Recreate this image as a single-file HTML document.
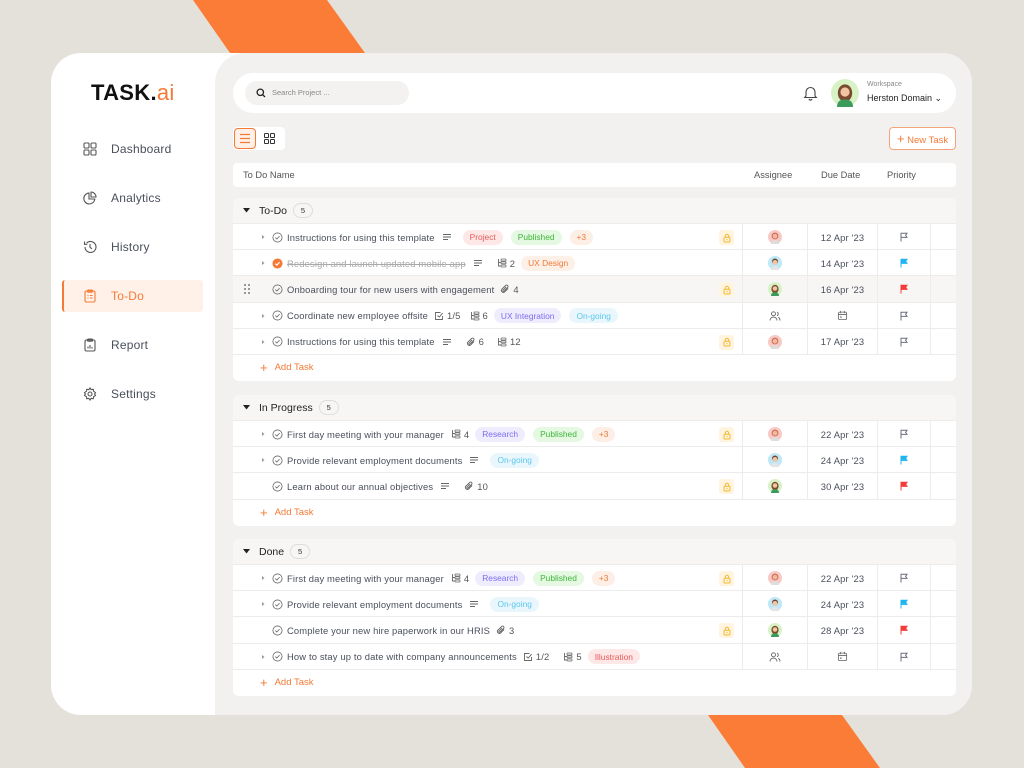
<!DOCTYPE html>
<html><head><meta charset="utf-8"><style>
*{margin:0;padding:0;box-sizing:border-box}
body{width:1024px;height:768px;background:#e4e1db;font-family:"Liberation Sans",sans-serif;position:relative;overflow:hidden;color:#4a4f5c}
.stripe{position:absolute;left:0;top:0}
.card{position:absolute;left:51px;top:53px;width:921px;height:662px;background:#fff;border-radius:30px;overflow:hidden}
.main{position:absolute;left:164px;top:0;width:757px;height:662px;background:#f2f1ef;border-radius:30px 0 0 0}
.logo{position:absolute;left:40px;top:27px;font-size:22px;font-weight:bold;color:#111;letter-spacing:.3px}
.logo span{color:#f47a36;font-weight:normal}
.nav{position:absolute;left:32px;display:flex;align-items:center;font-size:12px;color:#4a4f5c;letter-spacing:.2px}
.nav svg{margin-right:14px}
.active{position:absolute;left:11px;top:227px;width:141px;height:32px;background:#fff1e8;border-left:2px solid #f47a36;border-radius:3px}
.topbar{position:absolute;left:182px;top:20px;width:723px;height:40px;background:#fff;border-radius:20px}
.search{position:absolute;left:12px;top:8px;width:164px;height:24px;background:#f3f2f0;border-radius:12px;font-size:7.5px;color:#888;padding-left:27px;line-height:24px}
.abs{position:absolute}
.sec{position:absolute;left:182px;width:723px;background:#fff;border-radius:6px;overflow:hidden}
.hdr{height:26px;background:#f7f6f5;display:flex;align-items:center;padding-left:10px;font-size:10.5px;color:#222;border-bottom:1px solid #ececec}
.hdr .cnt{margin-left:6px;width:20px;height:15px;border:1px solid #ddd;border-radius:8px;font-size:7.5px;text-align:center;line-height:13px;color:#333}
.row{height:26.2px;position:relative;border-bottom:1px solid #ececec;font-size:9.4px;letter-spacing:.15px;color:#4a4f5c}
.row.hl{background:#f7f6f5}
.nm{position:absolute;left:27px;top:0;height:26px;display:flex;align-items:center;white-space:nowrap}
.nm > *{flex:none}
.c{position:absolute;top:0;height:26px;display:flex;align-items:center;justify-content:center;border-left:1px solid #ececec}
.c1{left:509px;width:65px}.c2{left:574px;width:70px}.c3{left:644px;width:53px}.c4{left:697px;width:26px}
.tag{height:15px;border-radius:8px;padding:0 7px;font-size:8.4px;display:inline-flex;align-items:center;margin-left:8px;letter-spacing:0}
.meta{display:flex;align-items:center;margin-left:8px;color:#555}
.meta svg{margin-right:3px}
.lock{position:absolute;left:486px;top:6px;width:15px;height:15px;background:#fff4e0;border-radius:3px;display:flex;align-items:center;justify-content:center}
.add{height:26px;display:flex;align-items:center;padding-left:27px;font-size:9.5px;color:#f47a36}
.add b{font-weight:normal;font-size:13px;margin-right:7px}
.strike{text-decoration:line-through;color:#aaa}
</style></head><body>
<svg class="stripe" width="1024" height="768"><polygon points="193,0 327,0 365,53 230,53" fill="#fb7c36"/><polygon points="708,715 842,715 880,768 745,768" fill="#fb7c36"/></svg>
<svg width="0" height="0" style="position:absolute">
<symbol id="caret" viewBox="0 0 6 6"><path d="M2 1l2.5 2L2 5z" fill="#999"/></symbol>
<symbol id="chk" viewBox="0 0 12 12"><circle cx="6" cy="6" r="5" fill="none" stroke="#666" stroke-width=".9"/><path d="M3.6 6.1l1.7 1.6 3-3.2" fill="none" stroke="#666" stroke-width=".9"/></symbol>
<symbol id="chko" viewBox="0 0 12 12"><circle cx="6" cy="6" r="5.5" fill="#f47a36"/><path d="M3.6 6.1l1.7 1.6 3-3.2" fill="none" stroke="#fff" stroke-width="1.2"/></symbol>
<symbol id="lines" viewBox="0 0 10 10"><path d="M1 2.5h8M1 5h8M1 7.5h5" stroke="#666" stroke-width=".9"/></symbol>
<symbol id="sub" viewBox="0 0 10 10"><path d="M1.5 1v7h2M1.5 4.5h2" fill="none" stroke="#666" stroke-width=".9"/><rect x="4" y="1" width="5" height="2" rx=".6" fill="none" stroke="#666" stroke-width=".8"/><rect x="4" y="3.8" width="5" height="2" rx=".6" fill="none" stroke="#666" stroke-width=".8"/><rect x="4" y="7" width="5" height="2" rx=".6" fill="none" stroke="#666" stroke-width=".8"/></symbol>
<symbol id="clip" viewBox="0 0 10 10"><path d="M8 4.5L4.6 8a2 2 0 01-2.8-2.8L5.6 1.5a1.4 1.4 0 012 2L4 7.1a.7.7 0 01-1-1l3.1-3.1" fill="none" stroke="#666" stroke-width=".9"/></symbol>
<symbol id="box" viewBox="0 0 10 10"><path d="M8.5 5v3.5h-7v-7h5" fill="none" stroke="#666" stroke-width=".9"/><path d="M3.5 4.5l1.7 1.6 3.5-4" fill="none" stroke="#666" stroke-width=".9"/></symbol>
<symbol id="lk" viewBox="0 0 10 10"><rect x="2" y="4.3" width="6" height="4.7" rx="1" fill="none" stroke="#f5b82e" stroke-width="1"/><path d="M3.3 4.3V3a1.7 1.7 0 013.4 0v1.3" fill="none" stroke="#f5b82e" stroke-width="1"/><circle cx="5" cy="6.6" r=".6" fill="#f5b82e"/></symbol>
<symbol id="fl" viewBox="0 0 10 10"><path d="M2 9.5V1.2h6L6.6 3.3 8 5.4H2" fill="none" stroke="#6a6f7c" stroke-width="1"/></symbol>
<symbol id="flb" viewBox="0 0 10 10"><path d="M2 9.5V1.2h6L6.6 3.3 8 5.4H2z" fill="#1fb6f0" stroke="#1fb6f0" stroke-width="1"/></symbol>
<symbol id="flr" viewBox="0 0 10 10"><path d="M2 9.5V1.2h6L6.6 3.3 8 5.4H2z" fill="#f53b3b" stroke="#f53b3b" stroke-width="1"/></symbol>
<symbol id="ppl" viewBox="0 0 12 12"><circle cx="4.5" cy="3.8" r="2" fill="none" stroke="#666" stroke-width=".9"/><path d="M1 10.5c0-2 1.5-3.4 3.5-3.4S8 8.5 8 10.5M8 2a2 2 0 010 3.7M9.3 7.3c1 .5 1.7 1.7 1.7 3.2" fill="none" stroke="#666" stroke-width=".9"/></symbol>
<symbol id="cal" viewBox="0 0 12 12"><rect x="1.5" y="2.3" width="9" height="8.2" rx="1.5" fill="none" stroke="#666" stroke-width=".9"/><path d="M1.5 5h9M4 1v2.5M8 1v2.5" stroke="#666" stroke-width=".9"/><rect x="3.5" y="7" width="1.5" height="1.5" fill="#666"/></symbol>
<symbol id="a1" viewBox="0 0 14 14"><circle cx="7" cy="7" r="7" fill="#f9c9c6"/><circle cx="7" cy="6" r="3.4" fill="#c96a4e"/><circle cx="7" cy="6.2" r="2.4" fill="#f2b8a0"/><path d="M3 14c0-3 2-4 4-4s4 1 4 4" fill="#ddd"/></symbol>
<symbol id="a2" viewBox="0 0 14 14"><circle cx="7" cy="7" r="7" fill="#bfe8f7"/><circle cx="7" cy="5.5" r="3" fill="#6b4530"/><circle cx="7" cy="6.5" r="2.5" fill="#f2c4a4"/><path d="M3 14c0-3 2-4 4-4s4 1 4 4" fill="#e5e5e5"/></symbol>
<symbol id="a3" viewBox="0 0 14 14"><circle cx="7" cy="7" r="7" fill="#d8f2c6"/><ellipse cx="7" cy="7" rx="3.6" ry="4.3" fill="#7a4a2e"/><circle cx="7" cy="6.5" r="2.3" fill="#f2c4a4"/><path d="M3 14c0-3 2-3.8 4-3.8s4 .8 4 3.8" fill="#3c9a5a"/></symbol>
</svg>

<div class="card">
 <div class="logo">TASK.<span>ai</span></div>
 <div class="active"></div>
 <div class="nav" style="top:89px"><svg width="14" height="14" viewBox="0 0 14 14" fill="none" stroke="#555" stroke-width="1.1"><rect x="1" y="1" width="5" height="5" rx="1"/><rect x="8" y="1" width="5" height="5" rx="1"/><rect x="1" y="8" width="5" height="5" rx="1"/><rect x="8" y="8" width="5" height="5" rx="1"/></svg>Dashboard</div>
 <div class="nav" style="top:138px"><svg width="14" height="14" viewBox="0 0 14 14" fill="none" stroke="#555" stroke-width="1.1"><path d="M6 2a5.5 5.5 0 105.8 6H6z"/><path d="M8 1v5h5A5 5 0 008 1z"/></svg>Analytics</div>
 <div class="nav" style="top:187px"><svg width="14" height="14" viewBox="0 0 14 14" fill="none" stroke="#555" stroke-width="1.1"><path d="M2 7a5.5 5.5 0 101.6-3.9M1.5 1.5v2.8h2.8M7 4v3.3l2 1.5"/></svg>History</div>
 <div class="nav" style="top:236px;color:#f47a36"><svg width="14" height="14" viewBox="0 0 14 14" fill="none" stroke="#f47a36" stroke-width="1.1"><rect x="2" y="2" width="10" height="11" rx="1.5"/><rect x="4.5" y="1" width="5" height="2.2" rx=".8"/><path d="M4.5 6.5h1M7 6.5h2.5M4.5 9h1M7 9h2.5"/></svg>To-Do</div>
 <div class="nav" style="top:285px"><svg width="14" height="14" viewBox="0 0 14 14" fill="none" stroke="#555" stroke-width="1.1"><rect x="2" y="2" width="10" height="11" rx="1.5"/><rect x="4.5" y="1" width="5" height="2.2" rx=".8"/><path d="M5 10.5V8.5M7 10.5V7M9 10.5V9"/></svg>Report</div>
 <div class="nav" style="top:334px"><svg width="14" height="14" viewBox="0 0 14 14" fill="none" stroke="#555" stroke-width="1.1"><circle cx="7" cy="7" r="2"/><path d="M7 1l1.2 1.7 2-.4.4 2L12.5 5.5 11.6 7l.9 1.5-1.9 1.2-.4 2-2-.4L7 13l-1.2-1.7-2 .4-.4-2L1.5 8.5 2.4 7l-.9-1.5 1.9-1.2.4-2 2 .4z"/></svg>Settings</div>

 <div class="main"></div>
 <div class="topbar">
  <div class="search">Search Project ...</div>
  <svg class="abs" style="left:23px;top:15px" width="10" height="10" viewBox="0 0 10 10" fill="none" stroke="#222" stroke-width="1.3"><circle cx="4.3" cy="4.3" r="3.2"/><path d="M6.7 6.7L9 9"/></svg>
  <svg class="abs" style="left:570px;top:12px" width="15" height="16" viewBox="0 0 15 16" fill="none" stroke="#444" stroke-width="1.1"><path d="M3 11V7a4.5 4.5 0 019 0v4l1.3 1.5H1.7zM6 14a1.6 1.6 0 003 0"/></svg>
  <svg class="abs" style="left:598px;top:6px" width="28" height="28" viewBox="0 0 14 14"><use href="#a3"/></svg>
  <div class="abs" style="left:634px;top:8px;font-size:7px;color:#888">Workspace</div>
  <div class="abs" style="left:634px;top:20px;font-size:9px;color:#222">Herston Domain ⌄</div>
 </div>
 <div class="abs" style="left:182px;top:74px;width:52px;height:23px;background:#fff;border-radius:4px"></div>
 <div class="abs" style="left:183px;top:75px;width:22px;height:21px;background:#fff1e8;border:1px solid #f47a36;border-radius:4px"></div>
 <svg class="abs" style="left:188px;top:80px" width="12" height="11" viewBox="0 0 12 11" stroke="#f47a36" stroke-width="1.2"><path d="M1 1.5h10M1 5.5h10M1 9.5h10"/></svg>
 <svg class="abs" style="left:213px;top:80px" width="11" height="11" viewBox="0 0 11 11" fill="none" stroke="#333" stroke-width="1"><rect x=".5" y=".5" width="4" height="4" rx=".8"/><rect x="6.5" y=".5" width="4" height="4" rx=".8"/><rect x=".5" y="6.5" width="4" height="4" rx=".8"/><rect x="6.5" y="6.5" width="4" height="4" rx=".8"/></svg>
 <div class="abs" style="left:838px;top:74px;width:67px;height:23px;background:#fff;border:1px solid #f4a47a;border-radius:4px;font-size:9.5px;color:#f47a36;line-height:21px;text-align:center"><b style="font-weight:normal;font-size:13px">+</b> New Task</div>
 <div class="abs" style="left:182px;top:110px;width:723px;height:24px;background:#fff;border-radius:4px;font-size:9.3px;color:#555">
  <span class="abs" style="left:10px;top:7px">To Do Name</span>
  <span class="abs" style="left:521px;top:7px">Assignee</span>
  <span class="abs" style="left:588px;top:7px">Due Date</span>
  <span class="abs" style="left:654px;top:7px">Priority</span>
 </div>

 <div class="sec" style="top:145px">
  <div class="hdr"><svg width="7" height="5" viewBox="0 0 7 5" style="margin-right:9px"><path d="M0 0h7L3.5 4.5z" fill="#222"/></svg>To-Do<span class="cnt">5</span></div>
  <div class="row"><div class="nm"><svg width="6" height="6"><use href="#caret"/></svg><svg width="11" height="11" style="margin:0 4px 0 6px"><use href="#chk"/></svg>Instructions for using this template<svg width="10" height="10" style="margin-left:7px"><use href="#lines"/></svg><span class="tag" style="background:#fde7e7;color:#e85a5a;margin-left:11px">Project</span><span class="tag" style="background:#e5f8e2;color:#3fb63a">Published</span><span class="tag" style="background:#fdeee6;color:#f07a3a">+3</span></div><div class="lock"><svg width="10" height="10"><use href="#lk"/></svg></div><div class="c c1"><svg width="14" height="14"><use href="#a1"/></svg></div><div class="c c2">12 Apr '23</div><div class="c c3"><svg width="10" height="10"><use href="#fl"/></svg></div><div class="c c4"></div></div>
  <div class="row"><div class="nm"><svg width="6" height="6"><use href="#caret"/></svg><svg width="11" height="11" style="margin:0 4px 0 6px"><use href="#chko"/></svg><span class="strike">Redesign and launch updated mobile app</span><svg width="10" height="10" style="margin-left:7px"><use href="#lines"/></svg><span class="meta" style="margin-left:14px"><svg width="10" height="10"><use href="#sub"/></svg>2</span><span class="tag" style="background:#fdf0e7;color:#f07a3a;margin-left:6px">UX Design</span></div><div class="c c1"><svg width="14" height="14"><use href="#a2"/></svg></div><div class="c c2">14 Apr '23</div><div class="c c3"><svg width="10" height="10"><use href="#flb"/></svg></div><div class="c c4"></div></div>
  <div class="row hl"><svg class="abs" style="left:11px;top:8px" width="6" height="10" viewBox="0 0 6 10" fill="#555"><circle cx="1" cy="1" r=".9"/><circle cx="5" cy="1" r=".9"/><circle cx="1" cy="5" r=".9"/><circle cx="5" cy="5" r=".9"/><circle cx="1" cy="9" r=".9"/><circle cx="5" cy="9" r=".9"/></svg><div class="nm"><span style="width:6px"></span><svg width="11" height="11" style="margin:0 4px 0 6px"><use href="#chk"/></svg>Onboarding tour for new users with engagement<span class="meta" style="margin-left:6px"><svg width="10" height="10"><use href="#clip"/></svg>4</span></div><div class="lock"><svg width="10" height="10"><use href="#lk"/></svg></div><div class="c c1"><svg width="14" height="14"><use href="#a3"/></svg></div><div class="c c2">16 Apr '23</div><div class="c c3"><svg width="10" height="10"><use href="#flr"/></svg></div><div class="c c4"></div></div>
  <div class="row"><div class="nm"><svg width="6" height="6"><use href="#caret"/></svg><svg width="11" height="11" style="margin:0 4px 0 6px"><use href="#chk"/></svg>Coordinate new employee offsite<span class="meta" style="margin-left:6px"><svg width="10" height="10"><use href="#box"/></svg>1/5</span><span class="meta" style="margin-left:9px"><svg width="10" height="10"><use href="#sub"/></svg>6</span><span class="tag" style="background:#efedfd;color:#7b6cf0;margin-left:6px">UX Integration</span><span class="tag" style="background:#e9f7fd;color:#5cc6ef">On-going</span></div><div class="c c1"><svg width="12" height="12"><use href="#ppl"/></svg></div><div class="c c2"><svg width="11" height="11"><use href="#cal"/></svg></div><div class="c c3"><svg width="10" height="10"><use href="#fl"/></svg></div><div class="c c4"></div></div>
  <div class="row"><div class="nm"><svg width="6" height="6"><use href="#caret"/></svg><svg width="11" height="11" style="margin:0 4px 0 6px"><use href="#chk"/></svg>Instructions for using this template<svg width="10" height="10" style="margin-left:7px"><use href="#lines"/></svg><span class="meta" style="margin-left:14px"><svg width="10" height="10"><use href="#clip"/></svg>6</span><span class="meta" style="margin-left:13px"><svg width="10" height="10"><use href="#sub"/></svg>12</span></div><div class="lock"><svg width="10" height="10"><use href="#lk"/></svg></div><div class="c c1"><svg width="14" height="14"><use href="#a1"/></svg></div><div class="c c2">17 Apr '23</div><div class="c c3"><svg width="10" height="10"><use href="#fl"/></svg></div><div class="c c4"></div></div>
  <div class="add"><b>+</b>Add Task</div>
 </div>

 <div class="sec" style="top:342px">
  <div class="hdr"><svg width="7" height="5" viewBox="0 0 7 5" style="margin-right:9px"><path d="M0 0h7L3.5 4.5z" fill="#222"/></svg>In Progress<span class="cnt">5</span></div>
  <div class="row"><div class="nm"><svg width="6" height="6"><use href="#caret"/></svg><svg width="11" height="11" style="margin:0 4px 0 6px"><use href="#chk"/></svg>First day meeting with your manager<span class="meta" style="margin-left:7px"><svg width="10" height="10"><use href="#sub"/></svg>4</span><span class="tag" style="background:#efedfd;color:#7b6cf0;margin-left:6px">Research</span><span class="tag" style="background:#e5f8e2;color:#3fb63a">Published</span><span class="tag" style="background:#fdeee6;color:#f07a3a">+3</span></div><div class="lock"><svg width="10" height="10"><use href="#lk"/></svg></div><div class="c c1"><svg width="14" height="14"><use href="#a1"/></svg></div><div class="c c2">22 Apr '23</div><div class="c c3"><svg width="10" height="10"><use href="#fl"/></svg></div><div class="c c4"></div></div>
  <div class="row"><div class="nm"><svg width="6" height="6"><use href="#caret"/></svg><svg width="11" height="11" style="margin:0 4px 0 6px"><use href="#chk"/></svg>Provide relevant employment documents<svg width="10" height="10" style="margin-left:7px"><use href="#lines"/></svg><span class="tag" style="background:#e9f7fd;color:#5cc6ef;margin-left:11px">On-going</span></div><div class="c c1"><svg width="14" height="14"><use href="#a2"/></svg></div><div class="c c2">24 Apr '23</div><div class="c c3"><svg width="10" height="10"><use href="#flb"/></svg></div><div class="c c4"></div></div>
  <div class="row"><div class="nm"><span style="width:6px"></span><svg width="11" height="11" style="margin:0 4px 0 6px"><use href="#chk"/></svg>Learn about our annual objectives<svg width="10" height="10" style="margin-left:7px"><use href="#lines"/></svg><span class="meta" style="margin-left:14px"><svg width="10" height="10"><use href="#clip"/></svg>10</span></div><div class="lock"><svg width="10" height="10"><use href="#lk"/></svg></div><div class="c c1"><svg width="14" height="14"><use href="#a3"/></svg></div><div class="c c2">30 Apr '23</div><div class="c c3"><svg width="10" height="10"><use href="#flr"/></svg></div><div class="c c4"></div></div>
  <div class="add"><b>+</b>Add Task</div>
 </div>

 <div class="sec" style="top:486px">
  <div class="hdr"><svg width="7" height="5" viewBox="0 0 7 5" style="margin-right:9px"><path d="M0 0h7L3.5 4.5z" fill="#222"/></svg>Done<span class="cnt">5</span></div>
  <div class="row"><div class="nm"><svg width="6" height="6"><use href="#caret"/></svg><svg width="11" height="11" style="margin:0 4px 0 6px"><use href="#chk"/></svg>First day meeting with your manager<span class="meta" style="margin-left:7px"><svg width="10" height="10"><use href="#sub"/></svg>4</span><span class="tag" style="background:#efedfd;color:#7b6cf0;margin-left:6px">Research</span><span class="tag" style="background:#e5f8e2;color:#3fb63a">Published</span><span class="tag" style="background:#fdeee6;color:#f07a3a">+3</span></div><div class="lock"><svg width="10" height="10"><use href="#lk"/></svg></div><div class="c c1"><svg width="14" height="14"><use href="#a1"/></svg></div><div class="c c2">22 Apr '23</div><div class="c c3"><svg width="10" height="10"><use href="#fl"/></svg></div><div class="c c4"></div></div>
  <div class="row"><div class="nm"><svg width="6" height="6"><use href="#caret"/></svg><svg width="11" height="11" style="margin:0 4px 0 6px"><use href="#chk"/></svg>Provide relevant employment documents<svg width="10" height="10" style="margin-left:7px"><use href="#lines"/></svg><span class="tag" style="background:#e9f7fd;color:#5cc6ef;margin-left:11px">On-going</span></div><div class="c c1"><svg width="14" height="14"><use href="#a2"/></svg></div><div class="c c2">24 Apr '23</div><div class="c c3"><svg width="10" height="10"><use href="#flb"/></svg></div><div class="c c4"></div></div>
  <div class="row"><div class="nm"><span style="width:6px"></span><svg width="11" height="11" style="margin:0 4px 0 6px"><use href="#chk"/></svg>Complete your new hire paperwork in our HRIS<span class="meta" style="margin-left:6px"><svg width="10" height="10"><use href="#clip"/></svg>3</span></div><div class="lock"><svg width="10" height="10"><use href="#lk"/></svg></div><div class="c c1"><svg width="14" height="14"><use href="#a3"/></svg></div><div class="c c2">28 Apr '23</div><div class="c c3"><svg width="10" height="10"><use href="#flr"/></svg></div><div class="c c4"></div></div>
  <div class="row"><div class="nm"><svg width="6" height="6"><use href="#caret"/></svg><svg width="11" height="11" style="margin:0 4px 0 6px"><use href="#chk"/></svg>How to stay up to date with company announcements<span class="meta" style="margin-left:6px"><svg width="10" height="10"><use href="#box"/></svg>1/2</span><span class="meta" style="margin-left:14px"><svg width="10" height="10"><use href="#sub"/></svg>5</span><span class="tag" style="background:#fde7e7;color:#e85a5a;margin-left:6px">Illustration</span></div><div class="c c1"><svg width="12" height="12"><use href="#ppl"/></svg></div><div class="c c2"><svg width="11" height="11"><use href="#cal"/></svg></div><div class="c c3"><svg width="10" height="10"><use href="#fl"/></svg></div><div class="c c4"></div></div>
  <div class="add"><b>+</b>Add Task</div>
 </div>
</div>
</body></html>
